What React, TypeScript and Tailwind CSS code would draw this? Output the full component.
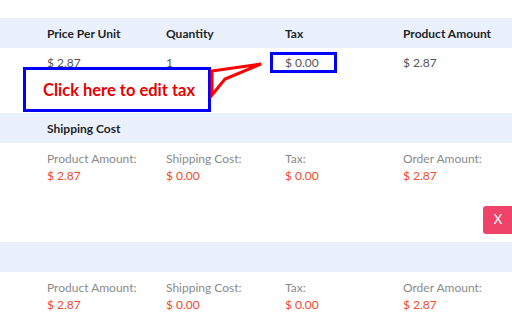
import React from "react"

const cols = "grid grid-cols-[119px_119px_118px_1fr] pl-[47px]"

function Summary() {
  const items = [
    ["Product Amount:", "$ 2.87"],
    ["Shipping Cost:", "$ 0.00"],
    ["Tax:", "$ 0.00"],
    ["Order Amount:", "$ 2.87"],
  ]
  return (
    <div className={cols}>
      {items.map(([label, value]) => (
        <div key={label} className="flex flex-col leading-[17px]">
          <span className="text-[#8a8a8a]">{label}</span>
          <span className="text-[#f04a2f]">{value}</span>
        </div>
      ))}
    </div>
  )
}

export default function App() {
  return (
    <div className="relative h-[320px] w-[512px] overflow-hidden bg-white text-[12px] font-['Lato',sans-serif]">
      <div className="h-[18px]" />
      <div className={`${cols} h-[30px] items-center bg-[#ebf1fc] pt-[1px] font-bold text-[#212529]`}>
        <span>Price Per Unit</span>
        <span>Quantity</span>
        <span>Tax</span>
        <span>Product Amount</span>
      </div>
      <div className={`${cols} h-[65px] pt-[6px] text-[#555]`}>
        <span>$ 2.87</span>
        <span>1</span>
        <span>$ 0.00</span>
        <span>$ 2.87</span>
      </div>
      <div className="flex h-[30px] items-center bg-[#ebf1fc] pl-[47px] pt-[1px] font-bold text-[#212529]">
        Shipping Cost
      </div>
      <div className="h-[99px] pt-[7px]">
        <Summary />
      </div>
      <div className="h-[30px] bg-[#ebf1fc]" />
      <div className="pt-[7px]">
        <Summary />
      </div>

      {/* tutorial overlay */}
      <div className="absolute left-[270px] top-[52px] h-[21px] w-[67px] border-[3px] border-[#0000ff]" />
      <div className="absolute left-[23px] top-[67px] flex h-[45px] w-[188px] items-center whitespace-nowrap border-[3px] border-[#0000ff] bg-white pl-[17px] pt-[1px] text-[16.5px] font-bold text-[#e60000]">
        Click here to edit tax
      </div>
      <svg className="absolute left-0 top-0" width="512" height="320">
        <polygon
          points="212,71 261,64 225,79 212,95"
          fill="white"
          stroke="#ff0000"
          strokeWidth="3"
          strokeLinejoin="miter"
        />
      </svg>

      <button className="absolute left-[483px] top-[206px] flex h-[28px] w-[34px] items-center justify-center rounded-[3px] bg-[#f0436a] pr-[4px] text-[13px] text-white">
        X
      </button>
    </div>
  )
}
